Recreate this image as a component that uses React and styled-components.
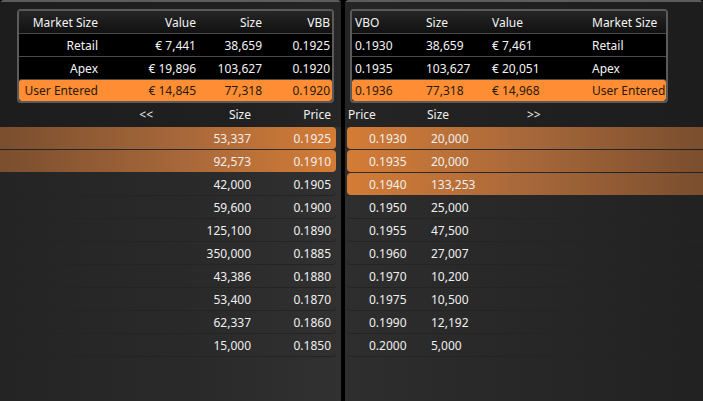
import React from "react";
import styled, { createGlobalStyle } from "styled-components";

const Global = createGlobalStyle`
  html, body { margin: 0; padding: 0; background: #000; }
  body { font-family: "Segoe UI", "Noto Sans", "Open Sans", sans-serif; font-size: 12px; }
  #root { width: 703px; height: 401px; overflow: hidden; }
`;

const Page = styled.div`
  display: flex;
  width: 703px;
  height: 401px;
  background: #000;
  gap: 4px;
`;

const Panel = styled.div`
  width: ${(p) => p.$w}px;
  flex: ${(p) => (p.$w ? "none" : "1")};
  display: flex;
  flex-direction: column;
  border-top: 2px solid #5c5c5c;
  border-radius: 4px 4px 0 0;
  background: ${(p) =>
    p.$side === "left"
      ? "linear-gradient(90deg, #242424 0%, #2a2a2a 60%, #313131 100%)"
      : "linear-gradient(90deg, #2e2e2e 0%, #272727 50%, #222 100%)"};
`;

const TopZone = styled.div`
  background: ${(p) =>
    p.$side === "left"
      ? "linear-gradient(90deg, #1d1d1d 0%, #202020 70%, #262626 100%)"
      : "linear-gradient(90deg, #252525 0%, #1f1f1f 60%, #1d1d1d 100%)"};
  padding: ${(p) => (p.$side === "left" ? "7px 7px 0 17px" : "7px 35px 0 5px")};
`;

const Summary = styled.div`
  border: 2px solid #5a5a5a;
  border-radius: 4px;
  background: #000;
  overflow: hidden;
`;

const SumRow = styled.div`
  display: grid;
  grid-template-columns: ${(p) => p.$cols};
  height: ${(p) => p.$h || 22}px;
  align-items: center;
  color: ${(p) => (p.$user ? "#2a1a0a" : "#f4f4f4")};
  background: ${(p) =>
    p.$user
      ? "#ff8d34"
      : p.$head
      ? "linear-gradient(180deg, #262626 0%, #111 100%)"
      : "#000"};
  border-top: ${(p) => (p.$head ? "none" : "1px solid #4a4a4a")};
  border-radius: ${(p) => (p.$user ? "3px" : "0")};
  font-size: 12px;
`;

const Cell = styled.div`
  text-align: ${(p) => p.$align || "right"};
  padding: ${(p) => (p.$align === "left" ? "0 0 0 3px" : "0 2px 0 0")};
  white-space: nowrap;
`;

const OrderHead = styled.div`
  display: grid;
  grid-template-columns: ${(p) => p.$cols};
  height: 21px;
  padding: 1px 0 2px;
  align-items: center;
  color: #f0f0f0;
  font-size: 12px;
  background: ${(p) =>
    p.$side === "left"
      ? "linear-gradient(90deg, #1d1d1d 0%, #202020 70%, #262626 100%)"
      : "linear-gradient(90deg, #252525 0%, #1f1f1f 60%, #1d1d1d 100%)"};
`;

const Orders = styled.div`
  display: flex;
  flex-direction: column;
  gap: 1px;
`;

const OrderRow = styled.div`
  display: grid;
  grid-template-columns: ${(p) => p.$cols};
  height: 22px;
  align-items: center;
  color: #efefef;
  font-size: 12px;
  margin: ${(p) => (p.$side === "left" ? "0 5px 0 0" : "0 0 0 2px")};
  border-radius: ${(p) => (p.$side === "left" ? "0 4px 4px 0" : "4px 0 0 4px")};
  background: ${(p) =>
    p.$hl
      ? p.$side === "left"
        ? "linear-gradient(90deg, #7a4e2e 0%, #a8683a 55%, #d47c36 100%)"
        : "linear-gradient(90deg, #d47c36 0%, #a8683a 50%, #7a4e2e 100%)"
      : "transparent"};
  box-shadow: ${(p) => (p.$hl ? "none" : "0 1px 0 #242424")};
`;

const leftSumCols = "81px 98px 66px 1fr";
const rightSumCols = "71px 66px 100px 1fr";
const leftOrdCols = "155px 98px 80px";
const rightOrdCols = "19px 62px 100px 1fr";

const leftSummary = [
  ["Retail", "€ 7,441", "38,659", "0.1925"],
  ["Apex", "€ 19,896", "103,627", "0.1920"],
];
const rightSummary = [
  ["0.1930", "38,659", "€ 7,461", "Retail"],
  ["0.1935", "103,627", "€ 20,051", "Apex"],
];

const bids = [
  ["53,337", "0.1925", true],
  ["92,573", "0.1910", true],
  ["42,000", "0.1905"],
  ["59,600", "0.1900"],
  ["125,100", "0.1890"],
  ["350,000", "0.1885"],
  ["43,386", "0.1880"],
  ["53,400", "0.1870"],
  ["62,337", "0.1860"],
  ["15,000", "0.1850"],
];
const asks = [
  ["0.1930", "20,000", true],
  ["0.1935", "20,000", true],
  ["0.1940", "133,253", true],
  ["0.1950", "25,000"],
  ["0.1955", "47,500"],
  ["0.1960", "27,007"],
  ["0.1970", "10,200"],
  ["0.1975", "10,500"],
  ["0.1990", "12,192"],
  ["0.2000", "5,000"],
];

export default function App() {
  return (
    <>
      <Global />
      <Page>
        <Panel $side="left" $w={341}>
          <TopZone $side="left">
            <Summary>
              <SumRow $head $cols={leftSumCols} $h={22}>
                <Cell>Market Size</Cell>
                <Cell>Value</Cell>
                <Cell>Size</Cell>
                <Cell>VBB</Cell>
              </SumRow>
              {leftSummary.map((r) => (
                <SumRow key={r[0]} $cols={leftSumCols}>
                  {r.map((c, i) => (
                    <Cell key={i}>{c}</Cell>
                  ))}
                </SumRow>
              ))}
              <SumRow $user $cols={leftSumCols} $h={21}>
                <Cell>User Entered</Cell>
                <Cell>€ 14,845</Cell>
                <Cell>77,318</Cell>
                <Cell>0.1920</Cell>
              </SumRow>
            </Summary>
          </TopZone>
          <OrderHead $side="left" $cols={leftOrdCols}>
            <Cell>&lt;&lt;</Cell>
            <Cell>Size</Cell>
            <Cell>Price</Cell>
          </OrderHead>
          <Orders>
            {bids.map(([s, p, hl], i) => (
              <OrderRow key={i} $side="left" $hl={hl} $cols={leftOrdCols}>
                <Cell />
                <Cell>{s}</Cell>
                <Cell>{p}</Cell>
              </OrderRow>
            ))}
          </Orders>
        </Panel>
        <Panel $side="right">
          <TopZone $side="right">
            <Summary>
              <SumRow $head $cols={rightSumCols} $h={22}>
                <Cell $align="left">VBO</Cell>
                <Cell $align="left">Size</Cell>
                <Cell $align="left">Value</Cell>
                <Cell $align="left">Market Size</Cell>
              </SumRow>
              {rightSummary.map((r) => (
                <SumRow key={r[3]} $cols={rightSumCols}>
                  {r.map((c, i) => (
                    <Cell key={i} $align="left">
                      {c}
                    </Cell>
                  ))}
                </SumRow>
              ))}
              <SumRow $user $cols={rightSumCols} $h={21}>
                <Cell $align="left">0.1936</Cell>
                <Cell $align="left">77,318</Cell>
                <Cell $align="left">€ 14,968</Cell>
                <Cell $align="left">User Entered</Cell>
              </SumRow>
            </Summary>
          </TopZone>
          <OrderHead $side="right" $cols="79px 100px 1fr">
            <Cell $align="left">Price</Cell>
            <Cell $align="left">Size</Cell>
            <Cell $align="left">&gt;&gt;</Cell>
          </OrderHead>
          <Orders>
            {asks.map(([p, s, hl], i) => (
              <OrderRow key={i} $side="right" $hl={hl} $cols={rightOrdCols}>
                <Cell />
                <Cell $align="left">{p}</Cell>
                <Cell $align="left">{s}</Cell>
                <Cell />
              </OrderRow>
            ))}
          </Orders>
        </Panel>
      </Page>
    </>
  );
}
